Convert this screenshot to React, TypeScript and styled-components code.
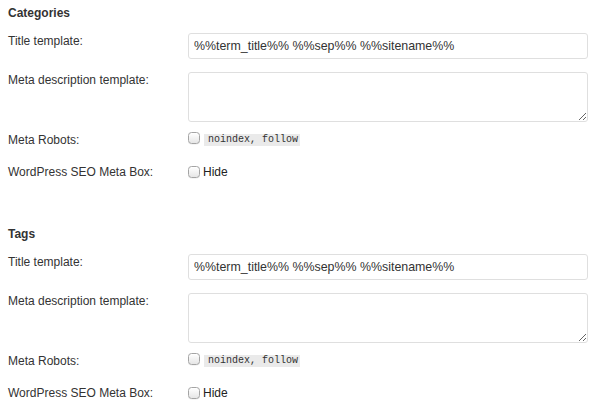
import React from "react";
import styled, { createGlobalStyle } from "styled-components";

const GlobalStyle = createGlobalStyle`
  html, body {
    margin: 0;
    padding: 0;
    background: #ffffff;
  }
  body {
    font-family: "Liberation Sans", Arial, Helvetica, sans-serif;
    font-size: 12px;
    color: #333333;
  }
`;

const Page = styled.div`
  display: flex;
  flex-direction: column;
  gap: 40px;
  padding: 0 8px;
  width: 583px;
`;

const Section = styled.section`
  display: flex;
  flex-direction: column;
`;

const Heading = styled.h3`
  margin: 0;
  padding-top: 6px;
  margin-bottom: 13px;
  font-size: 12px;
  line-height: 14px;
  font-weight: bold;
  color: #333333;
`;

const Row = styled.div<{ $gap: number }>`
  display: grid;
  grid-template-columns: 180px 400px;
  align-items: start;
  margin-bottom: ${(p) => p.$gap}px;
`;

const Label = styled.label<{ $pad?: number }>`
  font-size: 12px;
  line-height: 14px;
  padding-top: ${(p) => p.$pad ?? 0}px;
  color: #333333;
`;

const TextInput = styled.input`
  box-sizing: border-box;
  width: 400px;
  height: 26px;
  margin: 0;
  padding: 0 5px;
  border: 1px solid #dfdfdf;
  border-radius: 3px;
  font-family: "Liberation Sans", Arial, Helvetica, sans-serif;
  font-size: 12.4px;
  color: #333333;
  background: #ffffff;
  outline: none;
`;

const TextArea = styled.textarea`
  box-sizing: border-box;
  width: 400px;
  height: 50px;
  margin: 0;
  padding: 4px 5px;
  border: 1px solid #dfdfdf;
  border-radius: 3px;
  font-family: "Liberation Sans", Arial, Helvetica, sans-serif;
  font-size: 12.4px;
  color: #333333;
  background: #ffffff;
  display: block;
  outline: none;
`;

const Control = styled.div`
  display: flex;
  align-items: flex-start;
  height: 16px;
`;

const Check = styled.span<{ $top?: number }>`
  box-sizing: border-box;
  display: inline-block;
  width: 12px;
  height: 12px;
  margin-top: ${(p) => p.$top ?? 0}px;
  border: 1px solid #a4a4a4;
  border-radius: 3.5px;
  background: linear-gradient(#ffffff, #e6e6e6);
  box-shadow: inset 0 1px 0 #ffffff, 0 0.5px 0 rgba(0, 0, 0, 0.08);
  flex: none;
`;

const Code = styled.code`
  display: inline-block;
  margin-left: 4px;
  margin-top: 3px;
  height: 12px;
  line-height: 12px;
  padding: 0 2px 0 4px;
  background: #eaeaea;
  font-family: "Liberation Mono", "DejaVu Sans Mono", monospace;
  font-size: 10px;
  color: #333333;
`;

const CheckText = styled.span`
  margin-left: 3px;
  font-size: 12px;
  line-height: 14px;
  color: #222222;
`;

const sections = ["Categories", "Tags"];

function TaxonomySection({ title }: { title: string }) {
  return (
    <Section>
      <Heading>{title}</Heading>
      <Row $gap={13}>
        <Label $pad={1}>Title template:</Label>
        <TextInput readOnly value="%%term_title%% %%sep%% %%sitename%%" />
      </Row>
      <Row $gap={9}>
        <Label $pad={1}>Meta description template:</Label>
        <TextArea readOnly />
      </Row>
      <Row $gap={18}>
        <Label $pad={2}>Meta Robots:</Label>
        <Control>
          <Check $top={1} />
          <Code>noindex, follow</Code>
        </Control>
      </Row>
      <Row $gap={0}>
        <Label $pad={0}>WordPress SEO Meta Box:</Label>
        <Control>
          <Check $top={1} />
          <CheckText>Hide</CheckText>
        </Control>
      </Row>
    </Section>
  );
}

export default function App() {
  return (
    <>
      <GlobalStyle />
      <Page>
        {sections.map((s) => (
          <TaxonomySection key={s} title={s} />
        ))}
      </Page>
    </>
  );
}
